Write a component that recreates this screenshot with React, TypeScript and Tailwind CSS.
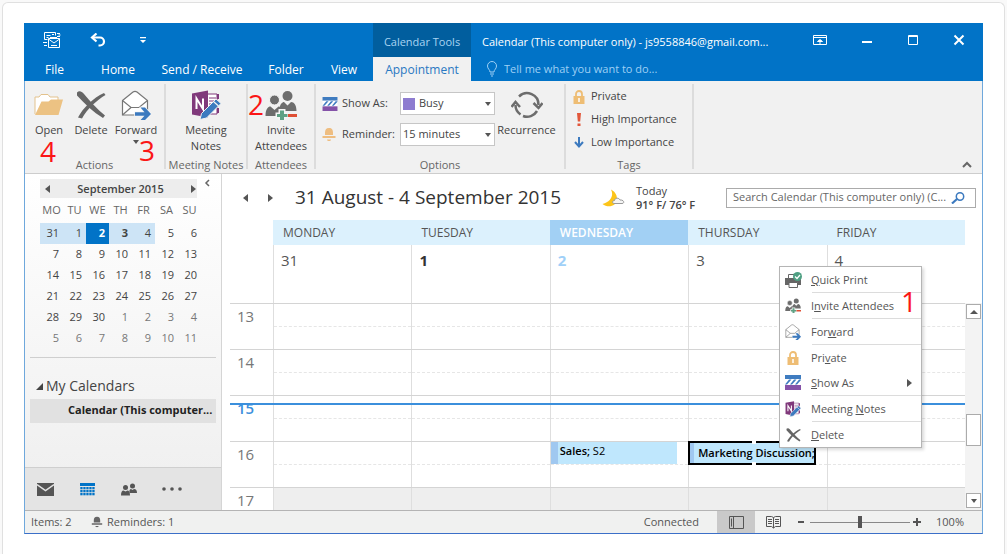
import { Fragment, ReactNode } from 'react'
import clsx from 'clsx'

type IconProps = { className?: string }

function SendReceiveIcon() {
  return (
    <svg viewBox="0 0 18 18" className="h-[18px] w-[18px]" fill="none" stroke="#fff" strokeWidth="1">
      <path d="M1.5 8.500v-7h11v3M1.5 8.500h3M3.500 4.500h4M3.500 6.500h2M9 3.500h2M14 2.500h3M14 5.500h3M15.500 4h2" />
      <path d="M5.500 7.500h11v9h-11zM5.500 8l5.500 4 5.500-4M8 14.500h6M0 11.500h4M1 14.500h3M7 6.500h7" />
    </svg>
  )
}

function UndoIcon() {
  return (
    <svg viewBox="0 0 16 14" className="h-3.5 w-4" fill="none" stroke="#fff" strokeWidth="2.2">
      <path d="M2 4.500h8a4 4 0 0 1 0 8H8.500" />
      <path d="M6.500.5 2 4.500l4.500 4" />
    </svg>
  )
}

function FolderIcon() {
  return (
    <svg viewBox="0 0 30 24" className="h-6 w-[30px]">
      <path d="M1 21V4h4l2-2.500h7L16 4h8v4" fill="#fff" stroke="#e3c28d" />
      <path d="M1 22 7.500 8.500h7L17 6.500h12L24.500 22z" fill="#ecc283" />
    </svg>
  )
}

function CrossIcon({ className }: IconProps) {
  return (
    <svg viewBox="0 0 30 28" className={className} fill="#666">
      <path d="M1 1.500C3-.5 5.500 0 8 3c6 7 13 15 21 21.500L27 27C17 21 9 13 1 4.500z" />
      <path d="M28 2 29.500 4C21 9 11 18 6 27.500L2 26.500C7 17 17 7 28 2z" />
    </svg>
  )
}

function ForwardIcon({ className }: IconProps) {
  return (
    <svg viewBox="0 0 30 30" className={className}>
      <path d="M1.500 10.500 12 2q2-1.300 4 0l10.500 8.500V25h-25z" fill="#fff" stroke="#777" strokeWidth="1.2" />
      <path d="m1.500 10.500 8.500 7h8l8.500-7M10 17.500 1.500 25" fill="none" stroke="#777" strokeWidth="1.200" />
      <path d="M14 22.200h9.500L19.500 17.500h4.500l6 6.500-6 6h-4.500l4-4.200H14z" fill="#3c7abf" stroke="#f6f6f6" strokeWidth="1.500" paintOrder="stroke" />
    </svg>
  )
}

function OneNoteIcon({ className }: IconProps) {
  return (
    <svg viewBox="0 0 30 30" className={className}>
      <path d="M16 4h10v20H16z" fill="#fff" stroke="#80397b" />
      <path d="M18 8h7M18 11h7M18 14h7M18 17h7" stroke="#80397b" />
      <path d="M27 4v5M27 11v5M27 18v5" stroke="#80397b" strokeWidth="2" />
      <path d="M1 3.500 17 .5v27L1 24.500z" fill="#80397b" />
      <path d="M5.500 19V8.500L12 19V8.500" fill="none" stroke="#fff" strokeWidth="2" />
      <path d="m9 29.500 1.500-6L25 9l5 4.500L15.500 28z" fill="#3c7abf" stroke="#f1f1f1" />
      <path d="m22.500 11.500 5 4.500" stroke="#f1f1f1" strokeWidth="1.200" />
    </svg>
  )
}

function InviteIcon({ className }: IconProps) {
  return (
    <svg viewBox="0 0 32 30" className={className}>
      <g fill="#6d6d6d">
        <circle cx="22.500" cy="6" r="5" />
        <path d="M14.500 20c0-6 3-8 4.500-8l3.500 3.500L26 12c3 0 5.500 3 5.500 9h-17z" />
        <circle cx="9.500" cy="10" r="5" stroke="#f6f6f6" />
        <path d="M.5 26c0-7 2.500-9.500 5-9.500L9.500 20l4-3.500c3 0 4.500 3 4.500 9.500z" />
      </g>
      <path
        d="M15 20.500h4v3.500h3.500v3H19v3.500h-4V27h-3v-3h3z"
        fill="#5fa184"
        stroke="#f6f6f6"
        strokeWidth="3"
        paintOrder="stroke"
      />
      <path d="M23 24h9v3h-9z" fill="#df4f35" />
    </svg>
  )
}

function ShowAsIcon({ className }: IconProps) {
  return (
    <svg viewBox="0 0 16 15" className={className}>
      <path d="M0 0h16v4H0z" fill="#3f7cc0" />
      <path d="M0 4h16v6H0z" fill="#fff" />
      <path d="M0 9.500 4 4.500h2.500l-4.500 5zM5 9.500l4-5h2.500l-4.500 5zM10 9.500l4-5h2v.5l-4 4.500z" fill="#3f7cc0" />
      <path d="M0 10h16v5H0z" fill="#8452a8" />
    </svg>
  )
}

function BellIcon({ className }: IconProps) {
  return (
    <svg viewBox="0 0 14 15" className={className} fill="currentColor">
      <path d="M7 1c3 0 4 2 4 4.500V8H3V5.500C3 3 4 1 7 1zM.5 9h13v2H.5z" />
      <path d="M5 12.500h4c0 2-4 2-4 0z" />
    </svg>
  )
}

function LockIcon({ className }: IconProps) {
  return (
    <svg viewBox="0 0 12 14" className={className}>
      <path d="M3 7V4a3 3 0 0 1 6 0v3" fill="none" stroke="#eebd74" strokeWidth="1.800" />
      <path d="M.5 6h11v8H.5z" fill="#eebd74" />
      <path d="M6 8v4" stroke="#fff" strokeWidth="1.500" />
    </svg>
  )
}

function RecurrenceIcon() {
  return (
    <svg viewBox="0 0 32 28" className="h-7 w-8" fill="none" stroke="#6d6d6d" strokeWidth="2.500">
      <path d="M8 5.500A11.500 11.500 0 0 1 27.500 14M4.500 14a11.500 11.500 0 0 0 5 9.500M12 25a11.500 11.500 0 0 0 14-5" />
      <path d="m22.500 12 5 5 4-5M.5 16l4-5 4.500 5" />
    </svg>
  )
}

function PrintIcon({ className }: IconProps) {
  return (
    <svg viewBox="0 0 17 16" className={className}>
      <path d="M0 6h16v7H0z" fill="#666" />
      <path d="M3.500 6V2.500h6V6M4 10.500h8.500v5H4z" fill="#fff" stroke="#666" />
      <circle cx="12.500" cy="4.500" r="4.500" fill="#4fa083" />
      <path d="m10 4.500 2 2 3-3.500" fill="none" stroke="#fff" strokeWidth="1.200" />
    </svg>
  )
}

function PeopleIcon() {
  return (
    <svg viewBox="0 0 16 13" className="h-[13px] w-4" fill="#555">
      <circle cx="11.500" cy="3" r="2.500" />
      <path d="M8.500 10c-.5-3 .5-4 1.500-4l1.500 1L13 6c2 0 3 1.500 3 4z" />
      <circle cx="4.500" cy="4.500" r="2.500" />
      <path d="M0 12.500C0 9 1 7.500 2.500 7.500l2 1 2-1C8 7.500 9 9 9 12.500z" />
    </svg>
  )
}

function WeatherIcon() {
  return (
    <svg viewBox="0 0 23 18" className="h-[18px] w-[23px]">
      <path d="M9 .5c3 6 0 12-8.500 14.500 5 4 14 3 14.500-5C15 5 12 2 9 .5z" fill="#fcc419" />
      <path d="M12 14.500c-2 0-2-3 .5-3 .5-3 4.500-3 5.500-.5 4-.5 5 3.500 2 3.500z" fill="#f5f5f5" stroke="#999" />
    </svg>
  )
}

function Triangle({ dir }: { dir: 'left' | 'right' | 'down' | 'up' }) {
  const paths = { left: 'M6 0v8L1 4z', right: 'M2 0v8l5-4z', down: 'M1 2h6L4 6z', up: 'M0 6h8L4 2z' }
  return (
    <svg viewBox="0 0 8 8" className="h-2 w-2" fill="#555">
      <path d={paths[dir]} />
    </svg>
  )
}

function Callout({ n, className }: { n: number; className: string }) {
  return <span className={clsx('absolute text-[28px] leading-none text-[#fb1616]', className)}>{n}</span>
}

function RibbonButton({ icon, label, className }: { icon: ReactNode; label: ReactNode; className?: string }) {
  return (
    <button className={clsx('flex flex-col items-center text-center leading-4 text-[#444]', className)}>
      <span className="flex h-[34px] items-center">{icon}</span>
      <span>{label}</span>
    </button>
  )
}

function RibbonGroup({ label, className, children }: { label: string; className: string; children: ReactNode }) {
  return (
    <section className={clsx('relative flex shrink-0 flex-col', className)}>
      <div className="flex flex-1 items-start">{children}</div>
      <div className="h-4 text-center leading-4 text-[#666]">{label}</div>
    </section>
  )
}

function Divider() {
  return <div className="mb-1 w-[2px] shrink-0 bg-[#dcdcdc]" />
}

function TitleBar() {
  const tabs = [
    { name: 'File', width: 'w-[57px]' },
    { name: 'Home', width: 'w-[70px]' },
    { name: 'Send / Receive', width: 'w-[98px]' },
    { name: 'Folder', width: 'w-[70px]' },
    { name: 'View', width: 'w-[46px]' },
  ]
  return (
    <header className="grid grid-cols-[349px_98px_1fr] grid-rows-[34px_24px] bg-[#0173c7] text-xs text-white">
      <div className="flex items-center gap-[29px] pl-[19px]">
        <button aria-label="Send and receive"><SendReceiveIcon /></button>
        <button aria-label="Undo"><UndoIcon /></button>
        <button aria-label="Customize toolbar" className="ml-1">
          <svg viewBox="0 0 8 8" className="h-2 w-2" fill="#fff"><path d="M1 1h6v1.200H1zM1 4h6L4 7z" /></svg>
        </button>
      </div>
      <div className="flex items-center justify-center bg-[#015e9e] pt-1 text-[11px] text-[#a9d4f2]">Calendar Tools</div>
      <div className="flex items-center pl-[11px]">
        <h1 className="min-w-0 flex-1 truncate pt-1 text-[11px]">Calendar (This computer only) - js9558846@gmail.com...</h1>
        <div className="flex items-center gap-[34px] pr-[18px]">
          <button aria-label="Ribbon options">
            <svg viewBox="0 0 14 12" className="h-3 w-3.5" fill="none" stroke="#fff">
              <path d="M.5 1.500h13v9H.5zM.5 3.500h13M7 10V6" />
              <path d="m4.500 7.500 2.500-2 2.500 2z" fill="#fff" />
            </svg>
          </button>
          <button aria-label="Minimize">
            <svg viewBox="0 0 12 12" className="h-3 w-3"><path d="M1 7h10v2H1z" fill="#fff" /></svg>
          </button>
          <button aria-label="Maximize">
            <svg viewBox="0 0 12 12" className="h-3 w-3" fill="none" stroke="#fff"><path d="M1.500 1.500h9v9h-9zM1 2.500h10" /></svg>
          </button>
          <button aria-label="Close">
            <svg viewBox="0 0 12 12" className="h-3 w-3" stroke="#fff" strokeWidth="2"><path d="m1.500 1.500 9 9M10.500 1.500l-9 9" /></svg>
          </button>
        </div>
      </div>
      <nav className="flex items-center pt-px pl-0.5">
        {tabs.map((tab) => (
          <button key={tab.name} className={clsx('shrink-0 text-center', tab.width)}>{tab.name}</button>
        ))}
      </nav>
      <button className="bg-[#f1f1f1] pt-px text-[#2a78c2]">Appointment</button>
      <label className="flex items-center gap-1.5 pl-[15px]">
        <svg viewBox="0 0 12 16" className="h-4 w-3" fill="none" stroke="#9fd0f5">
          <path d="M4 11c0-2.500-2.500-3-2.500-6a4.500 4.500 0 0 1 9 0c0 3-2.500 3.500-2.500 6zM4 13h4M5 15h2" />
        </svg>
        <input placeholder="Tell me what you want to do..." className="w-48 bg-transparent text-[11px] outline-none placeholder:text-[#9fd0f5]" />
      </label>
    </header>
  )
}

function Ribbon() {
  const tags = [
    { name: 'Private', icon: <LockIcon className="h-3.5 w-3" /> },
    {
      name: 'High Importance',
      icon: <svg viewBox="0 0 4 13" className="h-[13px] w-1" fill="#e2573b"><path d="M0 0h4l-.8 8.500H.8zM.5 10.500h3V13h-3z" /></svg>,
    },
    {
      name: 'Low Importance',
      icon: (
        <svg viewBox="0 0 10 11" className="h-[11px] w-2.5" fill="none" stroke="#3c7abf" strokeWidth="2">
          <path d="M5 0v9M1 5l4 4.500L9 5" />
        </svg>
      ),
    },
  ]
  return (
    <div className="flex h-[93px] border-b border-[#cdcdcd] bg-[#f1f1f1] pt-[3px] text-[11px]">
      <RibbonGroup label="Actions" className="w-[139px] pt-1">
        <RibbonButton icon={<FolderIcon />} label="Open" className="w-12" />
        <RibbonButton icon={<CrossIcon className="h-7 w-[30px]" />} label="Delete" className="w-9" />
        <RibbonButton
          icon={<ForwardIcon className="h-[30px] w-[30px]" />}
          label={<>Forward<span className="flex justify-center"><Triangle dir="down" /></span></>}
          className="w-[54px]"
        />
        <Callout n={4} className="top-[53px] left-[15px]" />
        <Callout n={3} className="top-[52px] left-[114px]" />
      </RibbonGroup>
      <Divider />
      <RibbonGroup label="Meeting Notes" className="w-[80px] pt-1">
        <RibbonButton icon={<OneNoteIcon className="h-[30px] w-[30px]" />} label={<>Meeting<br />Notes</>} className="w-full" />
      </RibbonGroup>
      <Divider />
      <RibbonGroup label="Attendees" className="w-[66px] pt-1">
        <RibbonButton icon={<InviteIcon className="h-[30px] w-8" />} label={<>Invite<br />Attendees</>} className="w-full" />
        <Callout n={2} className="top-1.5 left-0" />
      </RibbonGroup>
      <Divider />
      <RibbonGroup label="Options" className="w-[248px] pt-1">
        <div className="grid grid-cols-[16px_54px_95px] items-center gap-x-1 gap-y-2 pt-1 pl-[6px] text-[#444]">
          <ShowAsIcon className="h-3.5 w-4" />
          <label htmlFor="show-as">Show As:</label>
          <div className="flex h-[23px] items-center border border-[#c6c6c6] bg-white px-0.5">
            <span className="h-3 w-3 shrink-0 bg-[#8e7cd0]" />
            <select id="show-as" className="min-w-0 flex-1 appearance-none bg-transparent pl-1 outline-none">
              <option>Busy</option>
            </select>
            <Triangle dir="down" />
          </div>
          <BellIcon className="h-[15px] w-3.5 text-[#eebd80]" />
          <label htmlFor="reminder">Reminder:</label>
          <div className="flex h-[23px] items-center border border-[#c6c6c6] bg-white px-0.5">
            <select id="reminder" className="min-w-0 flex-1 appearance-none bg-transparent outline-none">
              <option>15 minutes</option>
            </select>
            <Triangle dir="down" />
          </div>
        </div>
        <RibbonButton icon={<RecurrenceIcon />} label="Recurrence" className="w-[63px]" />
      </RibbonGroup>
      <Divider />
      <RibbonGroup label="Tags" className="w-[126px] pt-px">
        <div className="flex flex-col text-[#444]">
          {tags.map((tag) => (
            <button key={tag.name} className="flex h-[23px] items-center gap-1.5 pl-[7px]">
              <span className="flex w-3 justify-center">{tag.icon}</span>
              {tag.name}
            </button>
          ))}
        </div>
      </RibbonGroup>
      <Divider />
      <button aria-label="Collapse the ribbon" className="mt-auto mr-2.5 mb-1 ml-auto">
        <svg viewBox="0 0 10 8" className="h-2 w-2.5" fill="none" stroke="#666" strokeWidth="2"><path d="m1 6 4-4 4 4" /></svg>
      </button>
    </div>
  )
}

const weeks = [
  [31, 1, 2, 3, 4, 5, 6],
  [7, 8, 9, 10, 11, 12, 13],
  [14, 15, 16, 17, 18, 19, 20],
  [21, 22, 23, 24, 25, 26, 27],
  [28, 29, 30, 1, 2, 3, 4],
  [5, 6, 7, 8, 9, 10, 11],
]

function MiniCalendar() {
  return (
    <div className="w-[161px] text-[11px] text-[#444]">
      <div className="flex h-[19px] w-[157px] items-center justify-between bg-[#ededed] pt-px pl-1">
        <button aria-label="Previous month"><Triangle dir="left" /></button>
        <span className="font-semibold">September 2015</span>
        <button aria-label="Next month"><Triangle dir="right" /></button>
      </div>
      <table className="w-full table-fixed border-collapse">
        <thead>
          <tr className="h-[25px]">
            {['MO', 'TU', 'WE', 'TH', 'FR', 'SA', 'SU'].map((d) => (
              <th key={d} className="p-0 text-center font-normal text-[#666]">{d}</th>
            ))}
          </tr>
        </thead>
        <tbody>
          {weeks.map((week, row) => (
            <tr key={row} className="h-[21px]">
              {week.map((day, col) => (
                <td
                  key={col}
                  className={clsx(
                    'p-0 pr-1 text-right',
                    row === 0 && col < 5 && col !== 2 && 'bg-[#cde4f6]',
                    row === 0 && col === 2 && 'bg-[#0173c7] font-bold text-white',
                    row === 0 && col === 3 && 'font-bold',
                    (row === 5 || (row === 4 && col > 2)) && 'text-[#777]'
                  )}
                >
                  {day}
                </td>
              ))}
            </tr>
          ))}
        </tbody>
      </table>
    </div>
  )
}

function Sidebar() {
  return (
    <aside className="flex w-[197px] shrink-0 flex-col border-r border-[#d5d5d5] bg-linear-to-b from-white to-[#eeeeee]">
      <div className="flex items-start pt-[5px] pl-[15px]">
        <MiniCalendar />
        <button aria-label="Minimize the folder pane" className="pl-0.5">
          <svg viewBox="0 0 8 8" className="h-2 w-2" fill="none" stroke="#666" strokeWidth="1.500"><path d="M6 1 3 4l3 3" /></svg>
        </button>
      </div>
      <div className="mx-[5px] mt-2 border-t border-[#cfcfcf]" />
      <div className="mx-[5px] mt-[15px]">
        <button className="flex h-[26px] items-center gap-[3px] pl-1.5 text-sm text-[#444]">
          <svg viewBox="0 0 7 7" className="h-[7px] w-[7px]" fill="#444"><path d="M7 0v7H0z" /></svg>
          My Calendars
        </button>
        <a href="#calendar" className="block h-6 truncate bg-[#e1e1e1] pl-[38px] text-[11px] leading-[22px] font-bold text-[#222]">
          Calendar (This computer...
        </a>
      </div>
      <nav className="mt-auto flex h-[43px] items-center border-t border-[#cfcfcf] bg-[#e4e4e4] pl-3">
        <button aria-label="Mail" className="w-[43px]">
          <svg viewBox="0 0 17 13" className="h-[13px] w-[17px]" fill="#555">
            <path d="M0 0h17v13H0z" />
            <path d="m0 1.500 8.500 6 8.500-6" fill="none" stroke="#e4e4e4" strokeWidth="1.500" />
          </svg>
        </button>
        <button aria-label="Calendar" className="w-[41px]">
          <svg viewBox="0 0 15 13" className="h-[13px] w-[15px]" fill="#0173c7">
            <path d="M0 0h15v3H0z" />
            {[4, 7, 10].map((y) => [0, 3, 6, 9, 12].map((x) => <rect key={`${x}-${y}`} x={x + 0.3} y={y} width="2.300" height="2.300" />))}
          </svg>
        </button>
        <button aria-label="People" className="w-10"><PeopleIcon /></button>
        <button aria-label="More">
          <svg viewBox="0 0 22 4" className="h-1 w-[22px]" fill="#555">
            <circle cx="3" cy="2" r="1.800" /><circle cx="11" cy="2" r="1.800" /><circle cx="19" cy="2" r="1.800" />
          </svg>
        </button>
      </nav>
    </aside>
  )
}

const days = [
  { name: 'MONDAY', date: 31 },
  { name: 'TUESDAY', date: 1 },
  { name: 'WEDNESDAY', date: 2 },
  { name: 'THURSDAY', date: 3 },
  { name: 'FRIDAY', date: 4 },
]

function SalesEvent() {
  return (
    <div className="absolute top-0 right-[11px] left-0 h-[22px] border-l-[7px] border-[#a0c8f0] bg-[#bfe7fd] pl-0.5 text-[11px] leading-[18px] text-black">
      <span className="font-semibold">Sales;</span> S2
    </div>
  )
}

function MarketingEvent() {
  return (
    <div className="absolute -top-px right-[11px] -left-px h-6 border-2 border-black bg-[#bfe7fd]">
      <div className="border-l-4 border-[#a0c8f0] pl-1 text-[11px] leading-5 font-semibold whitespace-nowrap text-black">Marketing Discussion;</div>
      <span className="absolute -top-[2px] left-1/2 h-[3px] w-1 bg-white" />
      <span className="absolute -bottom-[2px] left-1/2 h-[3px] w-1 bg-white" />
    </div>
  )
}

function WeekGrid() {
  return (
    <div className="min-w-0 flex-1">
      <div className="grid grid-cols-[43px_repeat(5,1fr)]">
        <div />
        {days.map((day) => (
          <div
            key={day.name}
            className={clsx(
              'h-[25px] pl-2.5 text-xs leading-[25px]',
              day.date === 2 ? 'bg-[#a2d0f4] font-semibold text-white' : 'bg-[#dcf1fd] text-[#555]'
            )}
          >
            {day.name}
          </div>
        ))}
        <div />
        {days.map((day) => (
          <div
            key={day.date}
            className={clsx(
              'h-[58px] border-l border-[#dedede] pt-[5px] pl-[7px] text-[15px] leading-5',
              day.date === 1 && 'font-bold text-[#333]',
              day.date === 2 && 'font-bold text-[#9fd0f8]',
              day.date > 2 && 'text-[#555]'
            )}
          >
            {day.date}
          </div>
        ))}
      </div>
      {[13, 14, 15, 16, 17].map((hour) => (
        <div
          key={hour}
          className={clsx(
            'relative grid grid-cols-[43px_repeat(5,1fr)] border-t border-[#d4d4d4]',
            hour === 17 ? 'h-[23px]' : 'h-[46px]'
          )}
        >
          <div className={clsx('pt-0.5 pl-[7px] text-[15px] leading-5', hour === 15 ? 'font-semibold text-[#3b8fdc]' : 'text-[#777]')}>
            {hour}
          </div>
          {days.map((day) => (
            <div key={day.date} className={clsx('relative border-l border-[#dedede]', hour === 17 && 'bg-[#eeeeee]')}>
              {hour !== 17 && <div className="h-[23px] border-b border-dashed border-[#e6e6e6]" />}
              {hour === 16 && day.date === 2 && <SalesEvent />}
              {hour === 16 && day.date === 3 && <MarketingEvent />}
            </div>
          ))}
          {hour === 15 && <div className="absolute inset-x-0 top-[7px] h-[2px] bg-[#3b8fdc]" />}
        </div>
      ))}
    </div>
  )
}

function ScrollBar() {
  return (
    <div className="mt-[83px] flex w-[17px] flex-col bg-[#f3f3f3] pt-px pr-px pl-px pb-0.5">
      <button aria-label="Scroll up" className="flex h-[15px] items-center justify-center border border-[#ababab] bg-white"><Triangle dir="up" /></button>
      <div className="flex-1 pt-[95px]">
        <div className="h-8 border border-[#ababab] bg-white" />
      </div>
      <button aria-label="Scroll down" className="flex h-[15px] items-center justify-center border border-[#ababab] bg-white"><Triangle dir="down" /></button>
    </div>
  )
}

// the label is split around its access key
const menuItems = [
  { label: ['', 'Q', 'uick Print'], icon: <PrintIcon className="h-4 w-[17px]" />, line: true },
  { label: ['I', 'n', 'vite Attendees'], icon: <InviteIcon className="h-[15px] w-4" />, line: true },
  { label: ['For', 'w', 'ard'], icon: <ForwardIcon className="h-4 w-4" />, line: true },
  { label: ['Pri', 'v', 'ate'], icon: <LockIcon className="h-3.5 w-3" />, line: false },
  { label: ['', 'S', 'how As'], icon: <ShowAsIcon className="h-[15px] w-4" />, line: true },
  { label: ['Meeting ', 'N', 'otes'], icon: <OneNoteIcon className="h-4 w-4" />, line: true },
  { label: ['', 'D', 'elete'], icon: <CrossIcon className="h-3.5 w-[15px]" />, line: false },
]

function ContextMenu() {
  return (
    <div role="menu" className="absolute top-[92px] left-[557px] w-[143px] border border-[#b5b5b5] bg-white text-[11px] text-[#555] shadow-[2px_2px_3px_rgba(0,0,0,0.15)]">
      {menuItems.map(({ label, icon, line }, i) => (
        <Fragment key={i}>
          <button role="menuitem" className="flex h-[25px] w-full items-center text-left">
            <span className="flex w-[26px] justify-center">{icon}</span>
            <span className="flex-1 pt-px pl-[5px]">
              {label[0]}<u>{label[1]}</u>{label[2]}
            </span>
            {label[1] === 'S' && <span className="pr-2"><Triangle dir="right" /></span>}
          </button>
          {line && <div className="ml-8 border-t border-[#dcdcdc]" />}
        </Fragment>
      ))}
      <Callout n={1} className="top-5 right-1" />
    </div>
  )
}

function CalendarPane() {
  return (
    <main className="relative min-w-0 flex-1 bg-white">
      <div className="flex h-[46px] items-center pt-px pr-[6px] pl-5">
        <button aria-label="Back" className="w-6"><Triangle dir="left" /></button>
        <button aria-label="Forward" className="w-[29px]"><Triangle dir="right" /></button>
        <h2 className="flex-1 truncate text-[19px] text-[#333]">31 August - 4 September 2015</h2>
        <WeatherIcon />
        <div className="w-[101px] pl-[11px] text-[11px] leading-[14px] text-[#444]">
          Today
          <div className="font-semibold">91° F/ 76° F</div>
        </div>
        <label className="flex h-5 w-[250px] items-center border border-[#ababab] pr-2.5 pl-1.5">
          <input placeholder="Search Calendar (This computer only) (C..." className="min-w-0 flex-1 text-[11px] outline-none placeholder:text-[#666]" />
          <svg viewBox="0 0 14 12" className="h-3 w-3.5" fill="none" stroke="#3c7abf">
            <circle cx="9" cy="4.500" r="3.700" strokeWidth="1.500" />
            <path d="M6 7 1 11.500" strokeWidth="2.200" />
          </svg>
        </label>
      </div>
      <div className="flex pl-2">
        <WeekGrid />
        <ScrollBar />
      </div>
      <ContextMenu />
    </main>
  )
}

function StatusBar() {
  return (
    <footer className="flex h-[23px] items-center border-t border-[#b4b4b4] bg-[#f0f1f0] pl-1.5 text-[11px] text-[#555]">
      <span className="w-[60px]">Items: 2</span>
      <BellIcon className="mr-1 h-3 w-3 text-[#666]" />
      <span className="flex-1">Reminders: 1</span>
      <span className="pr-[18px]">Connected</span>
      <button aria-label="Normal view" className="flex h-full w-[38px] items-center justify-center bg-[#c9c9c9]">
        <svg viewBox="0 0 15 13" className="h-[13px] w-[15px]" fill="none" stroke="#555"><path d="M.5.5h14v12H.5zM4.500.5v12M2.500 2.500v8" /></svg>
      </button>
      <button aria-label="Reading view" className="flex w-9 justify-center">
        <svg viewBox="0 0 15 13" className="h-[13px] w-[15px]" fill="none" stroke="#555">
          <path d="M.5.5h5l2 1 2-1h5v10h-5l-2 1.500-2-1.500h-5zM7.500 1.500V12M2 3.500h4M2 5.500h4M2 7.500h4M9 3.500h4M9 5.500h4M9 7.500h4" />
        </svg>
      </button>
      <button aria-label="Zoom out" className="mr-[5px] ml-[6px]">
        <svg viewBox="0 0 8 8" className="h-2 w-2" fill="#555"><path d="M1 3h6v2H1z" /></svg>
      </button>
      <input
        type="range"
        aria-label="Zoom"
        defaultValue={50}
        className="h-3 w-[100px] appearance-none bg-[linear-gradient(#888,#888)] bg-[length:100%_1px] bg-center bg-no-repeat [&::-webkit-slider-thumb]:h-3 [&::-webkit-slider-thumb]:w-1 [&::-webkit-slider-thumb]:appearance-none [&::-webkit-slider-thumb]:bg-[#555]"
      />
      <button aria-label="Zoom in" className="ml-[3px]">
        <svg viewBox="0 0 8 8" className="h-2 w-2" fill="#555"><path d="M3 0h2v3h3v2H5v3H3V5H0V3h3z" /></svg>
      </button>
      <span className="pr-[18px] pl-[15px]">100%</span>
    </footer>
  )
}

export default function App() {
  return (
    <div className="flex min-h-screen flex-col bg-[#f9f9f9] px-0.5 pt-0.5 font-['Open_Sans','Noto_Sans',sans-serif]">
      <div className="flex-1 rounded-t-[6px] border-x border-t border-[#e0e0e0] bg-white px-[21px] pt-5">
        <div className="border-x border-b border-x-[#6fa8dc] border-b-[#3b6fc8]">
          <div className="-mx-px"><TitleBar /></div>
          <Ribbon />
          <div className="flex">
            <Sidebar />
            <CalendarPane />
          </div>
          <StatusBar />
        </div>
      </div>
    </div>
  )
}
